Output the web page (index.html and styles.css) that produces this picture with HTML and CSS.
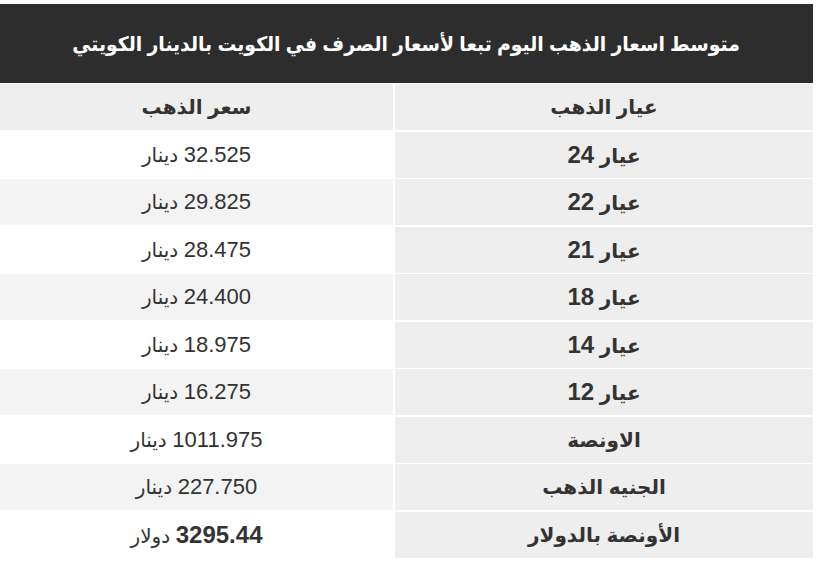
FILE: index.html
```html
<!DOCTYPE html>
<html lang="ar">
<head>
<meta charset="utf-8">
<link rel="stylesheet" href="styles.css">
</head>
<body>
<div class="page">
  <div class="table" dir="rtl">
    <div class="title"><span class="title-text">متوسط اسعار الذهب اليوم تبعا لأسعار الصرف في الكويت بالدينار الكويتي</span></div>
    <div class="cell col-head right"><span>عيار الذهب</span></div>
    <div class="cell col-head left"><span>سعر الذهب</span></div>

    <div class="cell right"><span><b>عيار <span class="num-b">24</span></b></span></div>
    <div class="cell left odd"><span><span class="num">32.525</span> دينار</span></div>
    <div class="cell right"><span><b>عيار <span class="num-b">22</span></b></span></div>
    <div class="cell left even"><span><span class="num">29.825</span> دينار</span></div>
    <div class="cell right"><span><b>عيار <span class="num-b">21</span></b></span></div>
    <div class="cell left odd"><span><span class="num">28.475</span> دينار</span></div>
    <div class="cell right"><span><b>عيار <span class="num-b">18</span></b></span></div>
    <div class="cell left even"><span><span class="num">24.400</span> دينار</span></div>
    <div class="cell right"><span><b>عيار <span class="num-b">14</span></b></span></div>
    <div class="cell left odd"><span><span class="num">18.975</span> دينار</span></div>
    <div class="cell right"><span><b>عيار <span class="num-b">12</span></b></span></div>
    <div class="cell left even"><span><span class="num">16.275</span> دينار</span></div>
    <div class="cell right"><span><b>الاونصة</b></span></div>
    <div class="cell left odd"><span><span class="num">1011.975</span> دينار</span></div>
    <div class="cell right"><span><b>الجنيه الذهب</b></span></div>
    <div class="cell left even"><span><span class="num">227.750</span> دينار</span></div>
    <div class="cell right"><span><b>الأونصة بالدولار</b></span></div>
    <div class="cell left odd"><span><b class="num-b">3295.44</b> دولار</span></div>
  </div>
</div>
</body>
</html>
```

FILE: styles.css
```css
html, body {
  margin: 0;
  padding: 0;
  background: #ffffff;
}

.page {
  direction: ltr;
  padding-top: 4px;
  font-family: "Liberation Sans", Arial, "DejaVu Sans", sans-serif;
  color: #333333;
}

.table {
  direction: rtl;
  width: 813px;
  display: grid;
  grid-template-columns: 418px 393px;
  grid-template-rows: 79px;
  grid-auto-rows: 46.3px;
  column-gap: 2px;
  row-gap: 1.2px;
}

.title {
  grid-column: 1 / span 2;
  background: #2d2d2d;
  color: #ffffff;
  font-weight: bold;
  font-size: 20px;
  display: flex;
  align-items: center;
  justify-content: center;
  white-space: nowrap;
}

.title-text {
  display: inline-block;
  transform: scaleX(0.94);
}

.cell {
  display: flex;
  align-items: center;
  justify-content: center;
  font-size: 20px;
  padding: 0 8px;
  white-space: nowrap;
}

.cell b {
  font-weight: bold;
}

.num {
  font-size: 22px;
}

.num-b {
  font-size: 24px;
  font-weight: bold;
}

.right {
  background: #eeeeee;
}

.col-head {
  font-weight: bold;
  background: #eeeeee;
}

.left.odd {
  background: #ffffff;
}

.left.even {
  background: #f3f3f3;
}
```
